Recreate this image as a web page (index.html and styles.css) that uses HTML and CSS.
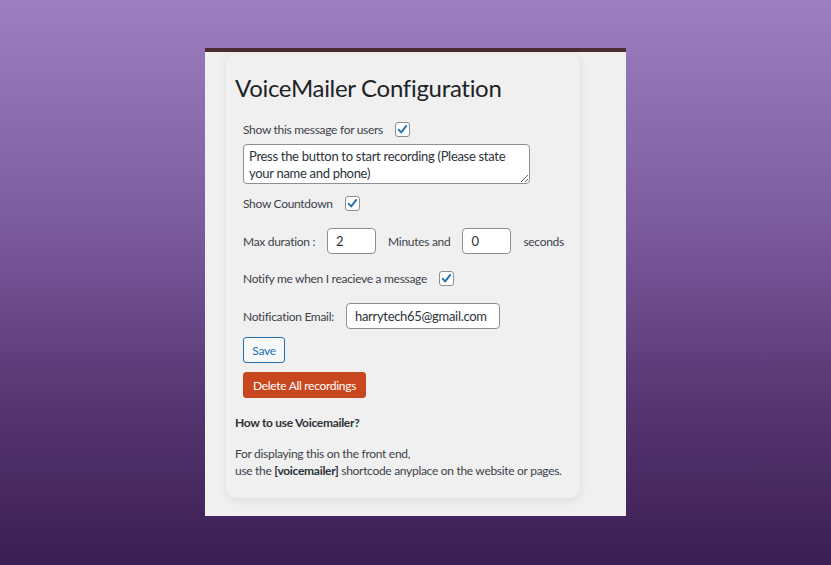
FILE: index.html
```html
<!DOCTYPE html>
<html>

<head>
    <title>VoiceMailer Configuration</title>
    <link rel="stylesheet" href="styles.css">
</head>

<body>

    <div class="wrap">
        <div class="card">
            <h1>VoiceMailer Configuration</h1>

            <form class="settings">
                <p class="row">
                    <label for="show_msg">Show this message for users</label>
                    <span class="check" id="show_msg">
                        <svg viewBox="0 0 16 16" width="16" height="16"><path d="M3.4 8.4 L6.4 11.6 L12.6 3.6" /></svg>
                    </span>
                </p>

                <textarea class="message">Press the button to start recording (Please state your name and phone)</textarea>

                <p class="row countdown">
                    <label for="countdown">Show Countdown</label>
                    <span class="check" id="countdown">
                        <svg viewBox="0 0 16 16" width="16" height="16"><path d="M3.4 8.4 L6.4 11.6 L12.6 3.6" /></svg>
                    </span>
                </p>

                <p class="row duration">
                    <label for="minutes">Max duration :</label>
                    <input type="text" id="minutes" class="small" value="2">
                    <span>Minutes and</span>
                    <input type="text" id="seconds" class="small" value="0">
                    <span>seconds</span>
                </p>

                <p class="row notify">
                    <label for="notify">Notify me when I reacieve a message</label>
                    <span class="check" id="notify">
                        <svg viewBox="0 0 16 16" width="16" height="16"><path d="M3.4 8.4 L6.4 11.6 L12.6 3.6" /></svg>
                    </span>
                </p>

                <p class="row email">
                    <label for="email">Notification Email:</label>
                    <input type="text" id="email" class="wide" value="harrytech65@gmail.com">
                </p>

                <button type="button" class="btn save">Save</button>
                <button type="button" class="btn delete">Delete All recordings</button>
            </form>

            <h4>How to use Voicemailer?</h4>
            <p class="help">
                For displaying this on the front end,<br>
                use the <b>[voicemailer]</b> shortcode anyplace on the website or pages.
            </p>
        </div>
    </div>

</body>

</html>
```

FILE: styles.css
```css
html,
body {
    height: 100%;
}

body {
    margin: 0;
    background: linear-gradient(180deg, #9d80bf 0%, #7b5b9e 40%, #55356f 72%, #3b1e53 100%);
    font-family: Lato, "Open Sans", sans-serif;
    color: #3c434a;
    letter-spacing: -0.3px;
}

.wrap {
    width: 421px;
    margin: 48px auto 0;
    background: #f1f0f1;
    border-top: 4px solid #4b2c33;
    padding: 1px 46px 18px 21px;
    box-sizing: border-box;
}

.card {
    background: #f0f0f0;
    border-radius: 10px;
    box-shadow: 0 2px 9px rgba(0, 0, 0, 0.09);
    padding: 20px 10px 19px 9px;
}

h1 {
    margin: 0;
    font-size: 24px;
    line-height: 30px;
    font-weight: 400;
    color: #1d2327;
    white-space: nowrap;
}

.settings {
    padding-left: 8px;
}

.row {
    display: flex;
    align-items: center;
    gap: 12px;
    margin: 0;
    font-size: 12px;
    height: 20px;
    white-space: nowrap;
}

.row > * {
    flex-shrink: 0;
}

.row:first-child {
    margin-top: 16px;
}

.check {
    width: 13px;
    height: 13px;
    border: 1px solid #8c8f94;
    border-radius: 3px;
    background: #fff;
    display: flex;
    align-items: center;
    justify-content: center;
}

.check svg {
    width: 13px;
    height: 13px;
}

.check path {
    fill: none;
    stroke: #2271b1;
    stroke-width: 2.4;
    stroke-linecap: round;
    stroke-linejoin: round;
}

.message {
    display: block;
    margin-top: 5px;
    width: 287px;
    height: 40px;
    box-sizing: border-box;
    border: 1px solid #8c8f94;
    border-radius: 4px;
    padding: 3px 5px;
    font-family: inherit;
    font-size: 13px;
    letter-spacing: -0.3px;
    line-height: 17px;
    color: #2c3338;
    resize: vertical;
    overflow: hidden;
}

.countdown {
    margin-top: 9px;
}

.duration {
    margin-top: 15px;
    height: 26px;
}

.notify {
    margin-top: 14px;
}

.email {
    margin-top: 15px;
    height: 26px;
}

input[type=text] {
    height: 26px;
    box-sizing: border-box;
    border: 1px solid #8c8f94;
    border-radius: 4px;
    background: #fff;
    padding: 0 8px;
    font-family: inherit;
    font-size: 13px;
    letter-spacing: -0.3px;
    color: #2c3338;
}

.small {
    width: 49px;
}

.wide {
    width: 154px;
}

.btn {
    display: block;
    height: 26px;
    border-radius: 3px;
    font-family: inherit;
    font-size: 12px;
    letter-spacing: -0.3px;
    padding: 0;
    cursor: pointer;
}

.save {
    margin-top: 8px;
    width: 42px;
    border: 1px solid #2271b1;
    background: #f6f7f7;
    color: #2271b1;
}

.delete {
    margin-top: 9px;
    width: 123px;
    border: 1px solid #c3461d;
    background: #c9471e;
    color: #fff;
}

h4 {
    margin: 15px 0 0;
    font-size: 12px;
    line-height: 20px;
    font-weight: 700;
    color: #2c3338;
}

.help {
    margin: 12px 0 0;
    font-size: 12px;
    line-height: 17px;
    white-space: nowrap;
}

.help b {
    font-weight: 700;
    color: #2c3338;
}
```
